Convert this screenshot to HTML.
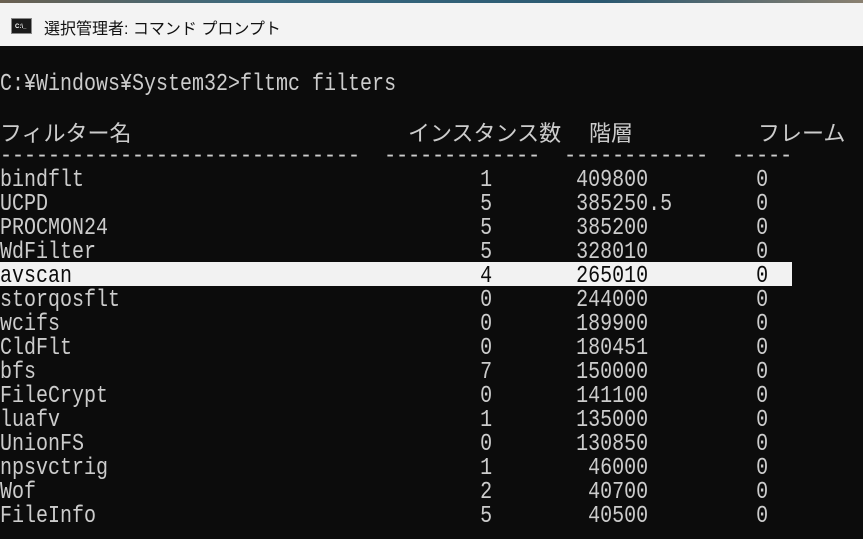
<!DOCTYPE html>
<html><head><meta charset="utf-8"><style>
body{margin:0;width:863px;height:539px;overflow:hidden;background:#0c0c0c;position:relative;font-family:"Liberation Mono","Noto Sans CJK JP",monospace;}
.top{position:absolute;left:0;top:0;width:863px;height:3px;background:linear-gradient(90deg,#6a6050,#3a6a80 30%,#2a5870 70%,#8a8070);}
.title{position:absolute;left:0;top:3px;width:863px;height:43px;background:#f3f3f3;}
.icon{position:absolute;left:11px;top:15px;width:21px;height:16px;background:#1a1a1a;border:1px solid #888;box-sizing:border-box;}
.icon span{position:absolute;left:3px;top:5px;font:bold 6px "Liberation Sans",sans-serif;color:#fff;}
.ttext{position:absolute;left:44px;top:12px;font:16px "Liberation Sans","Noto Sans CJK JP",sans-serif;color:#111;}
.l{position:absolute;left:0;height:24px;line-height:24px;font-size:20px;color:#cccccc;white-space:pre;margin-top:3px;transform:scaleY(1.2);transform-origin:0 50%;}
.hl{position:absolute;left:0;top:262px;width:792px;height:24px;background:#f2f2f2;}
.j{position:absolute;font-family:"Noto Sans CJK JP",sans-serif;font-size:22px;color:#cccccc;line-height:24px;top:120px;}
</style></head><body>
<div class="top"></div>
<div class="title"><div class="icon"><span>C:\_</span></div><div class="ttext">選択管理者: コマンド プロンプト</div></div>
<div class="l" style="top:70px">C:¥Windows¥System32&gt;fltmc filters</div>
<div class="j" style="left:0">フィルター名</div>
<div class="j" style="left:408px">インスタンス数</div>
<div class="j" style="left:589px">階層</div>
<div class="j" style="left:758px">フレーム</div>
<div class="l" style="top:142px">------------------------------  -------------  ------------  -----</div>
<div class="hl"></div>
<div class="l" style="top:166px">bindflt                                 1       409800         0</div>
<div class="l" style="top:190px">UCPD                                    5       385250.5       0</div>
<div class="l" style="top:214px">PROCMON24                               5       385200         0</div>
<div class="l" style="top:238px">WdFilter                                5       328010         0</div>
<div class="l" style="top:262px;color:#0c0c0c">avscan                                  4       265010         0</div>
<div class="l" style="top:286px">storqosflt                              0       244000         0</div>
<div class="l" style="top:310px">wcifs                                   0       189900         0</div>
<div class="l" style="top:334px">CldFlt                                  0       180451         0</div>
<div class="l" style="top:358px">bfs                                     7       150000         0</div>
<div class="l" style="top:382px">FileCrypt                               0       141100         0</div>
<div class="l" style="top:406px">luafv                                   1       135000         0</div>
<div class="l" style="top:430px">UnionFS                                 0       130850         0</div>
<div class="l" style="top:454px">npsvctrig                               1        46000         0</div>
<div class="l" style="top:478px">Wof                                     2        40700         0</div>
<div class="l" style="top:502px">FileInfo                                5        40500         0</div>
</body></html>
